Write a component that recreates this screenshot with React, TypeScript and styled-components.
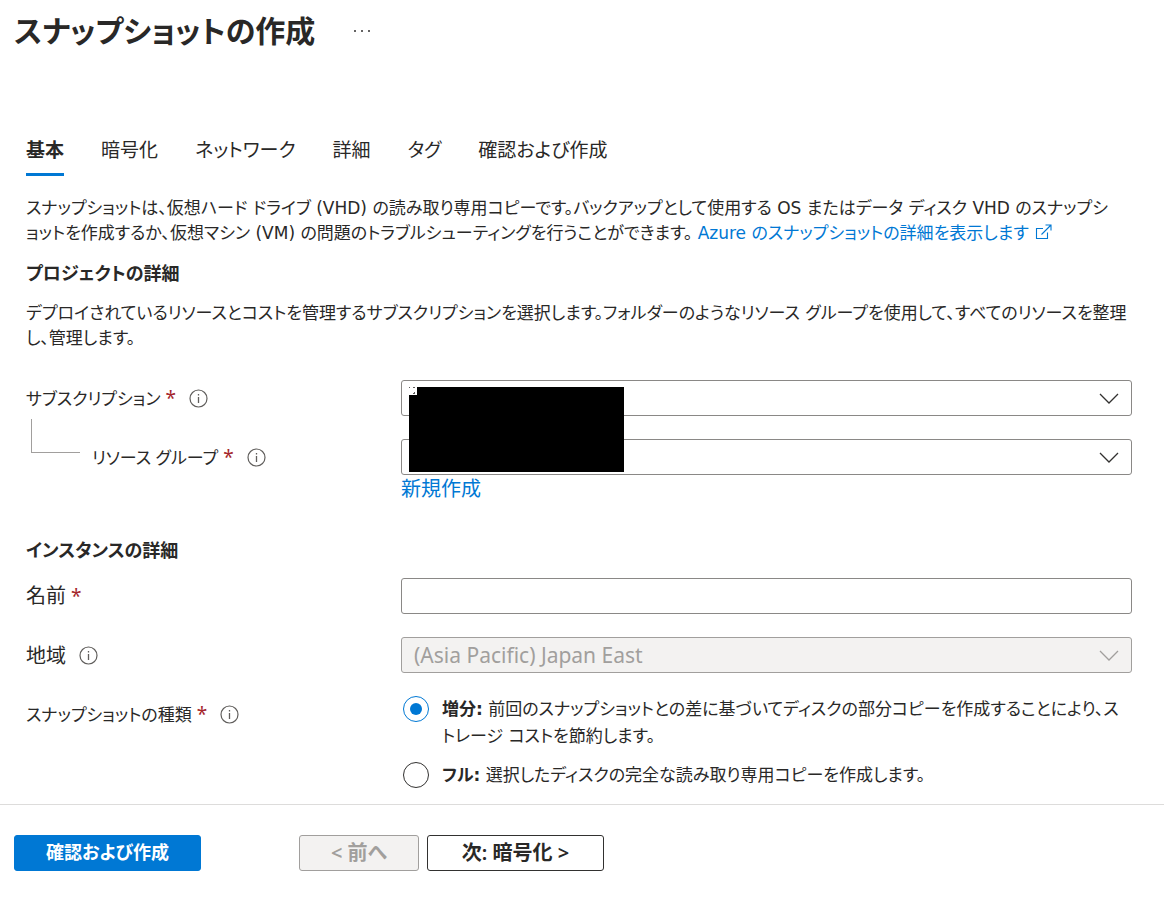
import React from "react";
import styled, { createGlobalStyle } from "styled-components";

const GlobalStyle = createGlobalStyle`
  *, *::before, *::after { box-sizing: border-box; }
  body {
    margin: 0;
    background: #fff;
    color: #292827;
    font-family: "Noto Sans", "Noto Sans CJK JP", sans-serif;
    font-size: 17px;
    line-height: 25px;
    font-feature-settings: "palt";
  }
  button, input, select { font: inherit; font-feature-settings: inherit; color: inherit; }
`;

const Header = styled.header`
  display: flex;
  align-items: center;
  gap: 38px;
  height: 62px;
  padding: 0 14px;
`;

const Title = styled.h1`
  margin: 0;
  font-size: 30px;
  font-weight: 600;
  line-height: 40px;
`;

const MoreButton = styled.button`
  display: flex;
  padding: 4px 0;
  border: 0;
  background: none;
`;

const Main = styled.main`
  padding: 66px 32px 15px 26px;
`;

const Tabs = styled.nav`
  display: flex;
  gap: 37px;
  margin-bottom: 20px;
`;

const Tab = styled.button<{ $active?: boolean }>`
  height: 48px;
  padding: 0;
  border: 0;
  border-bottom: 3px solid ${(p) => (p.$active ? "#0078d4" : "transparent")};
  background: none;
  font-size: 19px;
  font-weight: ${(p) => (p.$active ? 600 : 400)};
  white-space: nowrap;
`;

const Paragraph = styled.p`
  margin: 0;
  font-family: "DejaVu Sans", "Noto Sans CJK JP", sans-serif;
`;

const Link = styled.a`
  color: #0078d4;
  text-decoration: none;
  svg { margin-left: 6px; vertical-align: -1px; }
`;

const CreateLink = styled(Link)`
  display: block;
  font-size: 20px;
  line-height: 28px;
`;

const SectionTitle = styled.h2`
  margin: 15px 0;
  font-size: 18px;
  font-weight: 600;
  line-height: 25px;
`;

const Form = styled.div`
  position: relative;
  display: grid;
  grid-template-columns: 375px minmax(0, 1fr);
  row-gap: 23px;
`;

const ProjectForm = styled(Form)`
  margin: 29px 0 35px;
`;

const LabelCell = styled.div<{ $nested?: boolean; $large?: boolean }>`
  position: relative;
  display: flex;
  align-items: center;
  height: 36px;
  padding-left: ${(p) => (p.$nested ? 66 : 0)}px;
  font-size: ${(p) => (p.$large ? 20 : 17)}px;
  svg { margin-left: 13px; }
  &::before {
    content: ${(p) => (p.$nested ? '""' : "none")};
    position: absolute;
    left: 5px;
    bottom: 22px;
    width: 49px;
    height: 34px;
    border: solid #a19f9d;
    border-width: 0 0 1px 1px;
  }
`;

const Star = styled.span`
  margin-left: 5px;
  color: #a4262c;
  font-size: 19px;
`;

const SelectBox = styled.div`
  position: relative;
  svg {
    position: absolute;
    right: 13px;
    top: 13px;
    pointer-events: none;
  }
`;

const Select = styled.select`
  display: block;
  width: 100%;
  height: 36px;
  padding: 0 40px 0 12px;
  border: 1px solid #8a8886;
  border-radius: 3px;
  background: #fff;
  appearance: none;
  font-size: 21px;
  &:disabled {
    border-color: #a19f9d;
    background: #f3f2f1;
    color: #a19f9d;
    opacity: 1;
  }
`;

const TextInput = styled.input`
  display: block;
  width: 100%;
  height: 36px;
  padding: 0 12px;
  border: 1px solid #8a8886;
  border-radius: 3px;
`;

const Redaction = styled.div`
  position: absolute;
  left: 383px;
  top: 7px;
  width: 215px;
  height: 85px;
  svg { display: block; }
`;

const RadioList = styled.div`
  display: grid;
  row-gap: 12px;
  padding: 0 0 0 2px;
`;

const RadioRow = styled.label`
  display: flex;
  gap: 13px;
  font-family: "DejaVu Sans", "Noto Sans CJK JP", sans-serif;
  line-height: 27px;
  b { font-weight: 600; }
`;

const Radio = styled.input`
  appearance: none;
  flex: none;
  display: grid;
  place-items: center;
  width: 26px;
  height: 26px;
  margin: 0;
  border: 1px solid #323130;
  border-radius: 50%;
  &:checked { border-color: #0078d4; }
  &:checked::before {
    content: "";
    width: 12px;
    height: 12px;
    border-radius: 50%;
    background: #0078d4;
  }
`;

const Footer = styled.footer`
  display: flex;
  gap: 8px;
  padding: 30px 14px 26px;
  border-top: 1px solid #dddcdb;
`;

const Button = styled.button<{ $primary?: boolean; $width: number }>`
  min-width: ${(p) => p.$width}px;
  height: 36px;
  padding: 0 16px 2px;
  border: 1px solid ${(p) => (p.$primary ? "#0078d4" : "#323130")};
  border-radius: 3px;
  background: ${(p) => (p.$primary ? "#0078d4" : "#fff")};
  color: ${(p) => (p.$primary ? "#fff" : "#292827")};
  margin-right: ${(p) => (p.$primary ? 90 : 0)}px;
  font-size: ${(p) => (p.$primary ? 18 : 20)}px;
  font-weight: 600;
  white-space: nowrap;
  &:disabled {
    border-color: #a19f9d;
    background: #f3f2f1;
    color: #a19f9d;
  }
`;

const Dots = () => (
  <svg width="18" height="4" viewBox="0 0 18 4" fill="#323130" aria-hidden="true">
    <circle cx="2" cy="2" r="1" />
    <circle cx="9" cy="2" r="1" />
    <circle cx="16" cy="2" r="1" />
  </svg>
);

const InfoIcon = () => (
  <svg width="19" height="19" viewBox="0 0 19 19" fill="none" stroke="#605e5c" role="img" aria-label="情報">
    <circle cx="9.5" cy="9.5" r="8.5" strokeWidth="1.2" />
    <path d="M9.5 8v6M9.5 5v1.5" strokeWidth="1.3" />
  </svg>
);

const Chevron = ({ color = "#323130" }: { color?: string }) => (
  <svg width="20" height="11" viewBox="0 0 20 11" fill="none" stroke={color} strokeWidth="1.3" aria-hidden="true">
    <path d="M1 1l9 9 9-9" />
  </svg>
);

const ExternalIcon = () => (
  <svg width="17" height="16" viewBox="0 0 17 16" fill="none" stroke="#0078d4" strokeWidth="1.1" aria-hidden="true">
    <path d="M8 4.500H1.500V14.500H12.500V8.500M10.500 1h5.500v5.500M16 1L6.500 10.500" />
  </svg>
);

const Label = ({ id, text, required, info, nested, large }: {
  id: string; text: string; required?: boolean; info?: boolean; nested?: boolean; large?: boolean;
}) => (
  <LabelCell $nested={nested} $large={large}>
    <label htmlFor={id} id={`${id}-label`}>
      {text}
      {required && <Star>*</Star>}
    </label>
    {info && <InfoIcon />}
  </LabelCell>
);

const tabs = ["基本", "暗号化", "ネットワーク", "詳細", "タグ", "確認および作成"];

export default function App() {
  return (
    <>
      <GlobalStyle />
      <Header>
        <Title>スナップショットの作成</Title>
        <MoreButton aria-label="その他"><Dots /></MoreButton>
      </Header>
      <Main>
        <Tabs>
          {tabs.map((t, i) => <Tab key={t} $active={i === 0}>{t}</Tab>)}
        </Tabs>
        <Paragraph>
          スナップショットは、仮想ハード ドライブ (VHD) の読み取り専用コピーです。バックアップとして使用する OS またはデータ ディスク VHD のスナップシ<br />
          ョットを作成するか、仮想マシン (VM) の問題のトラブルシューティングを行うことができます。{" "}
          <Link href="#">Azure のスナップショットの詳細を表示します<ExternalIcon /></Link>
        </Paragraph>
        <SectionTitle>プロジェクトの詳細</SectionTitle>
        <Paragraph>
          デプロイされているリソースとコストを管理するサブスクリプションを選択します。フォルダーのようなリソース グループを使用して、すべてのリソースを整理<br />
          し、管理します。
        </Paragraph>
        <ProjectForm>
          <Label id="subscription" text="サブスクリプション" required info />
          <SelectBox>
            <Select id="subscription"><option></option></Select>
            <Chevron />
          </SelectBox>
          <Label id="group" text="リソース グループ" required info nested />
          <div>
            <SelectBox>
              <Select id="group"><option></option></Select>
              <Chevron />
            </SelectBox>
            <CreateLink href="#">新規作成</CreateLink>
          </div>
          <Redaction>
            <svg width="215" height="85" viewBox="0 0 215 85" aria-hidden="true">
              <path d="M0 0H8V8H0Z" fill="#fff" />
              <path d="M8 0H215V85H0V8H8Z" />
              <path d="M0 0h1v1h-1zM4 0h2v1h-2zM5 5h1v1h-1zM4 6h2v1h-2z" fill="#605e5c" />
            </svg>
          </Redaction>
        </ProjectForm>
        <SectionTitle>インスタンスの詳細</SectionTitle>
        <Form>
          <Label id="name" text="名前" required large />
          <TextInput id="name" type="text" />
          <Label id="region" text="地域" info large />
          <SelectBox>
            <Select id="region" disabled><option>(Asia Pacific) Japan East</option></Select>
            <Chevron color="#a19f9d" />
          </SelectBox>
          <Label id="incremental" text="スナップショットの種類" required info />
          <RadioList role="radiogroup" aria-labelledby="incremental-label">
            <RadioRow>
              <Radio id="incremental" type="radio" name="kind" defaultChecked />
              <span><b>増分:</b> 前回のスナップショットとの差に基づいてディスクの部分コピーを作成することにより、ス<br />トレージ コストを節約します。</span>
            </RadioRow>
            <RadioRow>
              <Radio type="radio" name="kind" />
              <span><b>フル:</b> 選択したディスクの完全な読み取り専用コピーを作成します。</span>
            </RadioRow>
          </RadioList>
        </Form>
      </Main>
      <Footer>
        <Button $primary $width={187}>確認および作成</Button>
        <Button disabled $width={120}>&lt; 前へ</Button>
        <Button $width={177}>次: 暗号化 &gt;</Button>
      </Footer>
    </>
  );
}
